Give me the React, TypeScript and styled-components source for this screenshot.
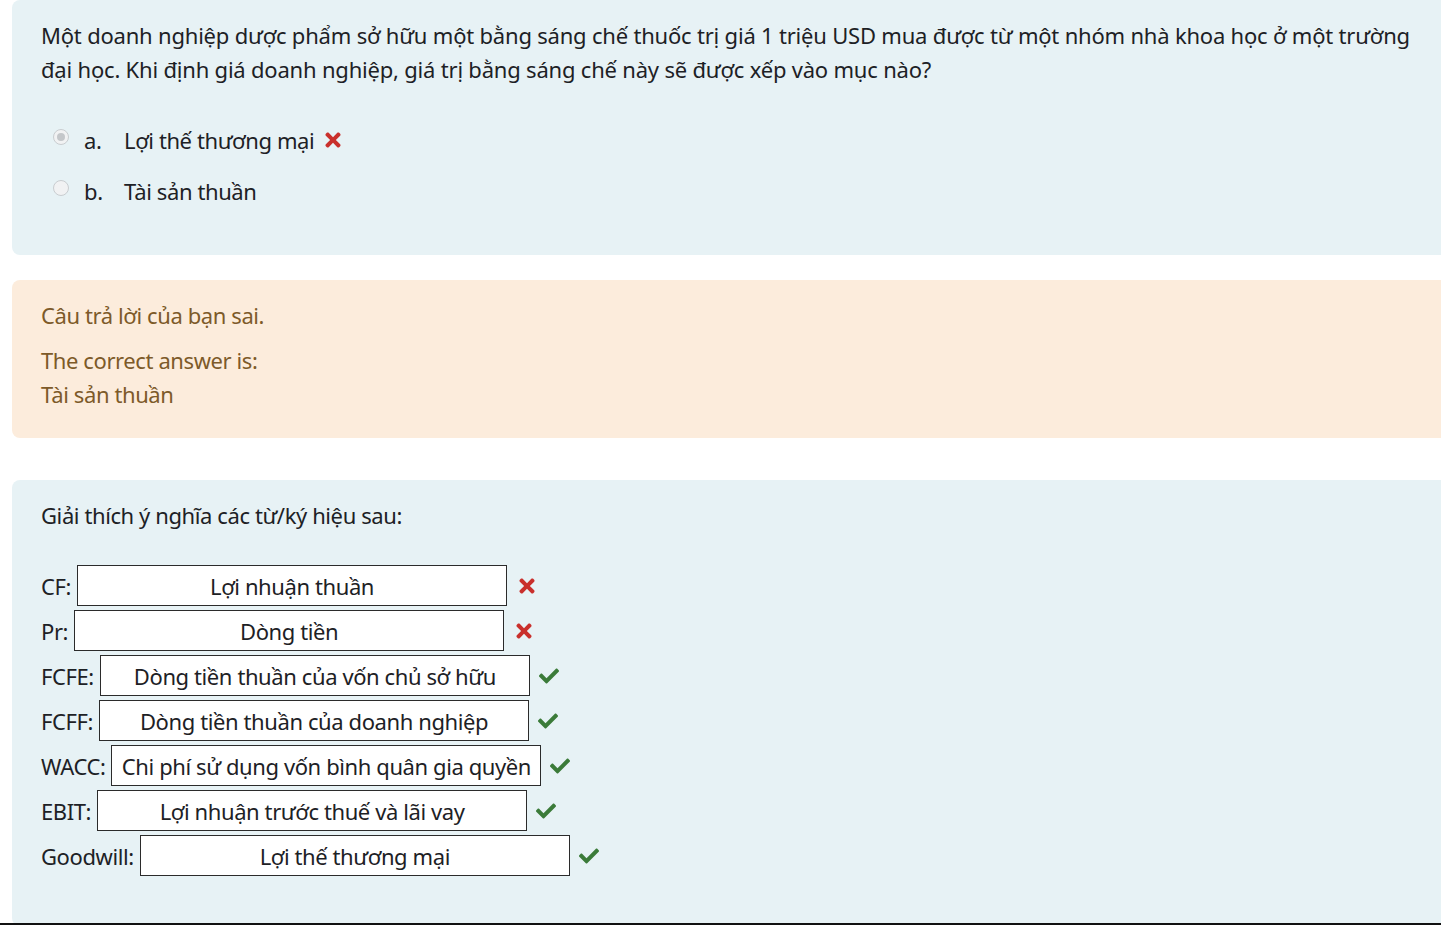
import React from "react";
import styled, { createGlobalStyle } from "styled-components";
import { FaTimes, FaCheck } from "react-icons/fa";

const Global = createGlobalStyle`
  html, body { margin: 0; padding: 0; background: #ffffff; overflow: hidden; }
  body { font-family: "Noto Sans", "Open Sans", sans-serif; color: #1d2125; }
  * { box-sizing: border-box; }
`;

const Page = styled.div`
  width: 1441px;
  height: 925px;
  overflow: hidden;
  display: flex;
  flex-direction: column;
  padding-left: 12px;
  border-bottom: 2px solid #111;
`;

const Panel = styled.div<{ $tone: "info" | "outcome"; $pt: number; $pb: number; $mt: number }>`
  width: calc(100% + 40px);
  margin-top: ${(p) => p.$mt}px;
  border-radius: 8px;
  padding: ${(p) => p.$pt}px 0 ${(p) => p.$pb}px 29px;
  background: ${(p) => (p.$tone === "info" ? "#e7f2f5" : "#fcecdc")};
  color: ${(p) => (p.$tone === "info" ? "#1d2125" : "#7d5a29")};
  font-size: 22px;
  line-height: 34px;
  letter-spacing: -0.4px;
  flex-shrink: 0;
`;

const Question = styled.div`
  width: 1390px;
  letter-spacing: -0.2px;
`;

const Options = styled.div`
  margin-top: 28px;
  display: flex;
  flex-direction: column;
`;

const Option = styled.div`
  display: flex;
  align-items: center;
  height: 51px;
  padding-left: 12px;
`;

const Radio = styled.span<{ $checked?: boolean }>`
  width: 16px;
  height: 16px;
  border-radius: 50%;
  border: 1px solid #c9cdd0;
  background: #f1f2f3;
  display: inline-flex;
  align-items: center;
  justify-content: center;
  margin-top: -6px;
  &::after {
    content: "";
    width: 8px;
    height: 8px;
    border-radius: 50%;
    background: ${(p) => (p.$checked ? "#c4c7ca" : "transparent")};
  }
`;

const Letter = styled.span`
  margin-left: 15px;
  width: 40px;
`;

const Cross = styled(FaTimes)<{ $ml?: number }>`
  color: #c9302c;
  font-size: 22px;
  margin-left: ${(p) => p.$ml ?? 0}px;
`;

const Check = styled(FaCheck)`
  color: #3b7b39;
  font-size: 20px;
`;

const Para = styled.div<{ $mt?: number }>`
  margin-top: ${(p) => p.$mt ?? 0}px;
`;

const Rows = styled.div`
  margin-top: 33px;
  display: flex;
  flex-direction: column;
  gap: 4px;
`;

const Row = styled.div`
  display: flex;
  align-items: center;
  height: 41px;
`;

const Label = styled.span`
  margin-right: 6px;
`;

const Box = styled.div`
  width: 430px;
  height: 41px;
  border: 1px solid #2b2b2b;
  background: #ffffff;
  display: flex;
  align-items: center;
  justify-content: center;
  white-space: nowrap;
`;

const Mark = styled.span`
  margin-left: 9px;
  display: inline-flex;
  align-items: center;
`;

const rows: { label: string; value: string; ok: boolean }[] = [
  { label: "CF:", value: "Lợi nhuận thuần", ok: false },
  { label: "Pr:", value: "Dòng tiền", ok: false },
  { label: "FCFE:", value: "Dòng tiền thuần của vốn chủ sở hữu", ok: true },
  { label: "FCFF:", value: "Dòng tiền thuần của doanh nghiệp", ok: true },
  { label: "WACC:", value: "Chi phí sử dụng vốn bình quân gia quyền", ok: true },
  { label: "EBIT:", value: "Lợi nhuận trước thuế và lãi vay", ok: true },
  { label: "Goodwill:", value: "Lợi thế thương mại", ok: true },
];

export default function App() {
  return (
    <>
      <Global />
      <Page>
        <Panel $tone="info" $pt={18} $pb={39} $mt={0}>
          <Question>
            Một doanh nghiệp dược phẩm sở hữu một bằng sáng chế thuốc trị giá 1 triệu USD mua được từ một nhóm nhà khoa học ở một trường
            đại học. Khi định giá doanh nghiệp, giá trị bằng sáng chế này sẽ được xếp vào mục nào?
          </Question>
          <Options>
            <Option>
              <Radio $checked />
              <Letter>a.</Letter>
              <span>Lợi thế thương mại</span>
              <Cross $ml={8} />
            </Option>
            <Option>
              <Radio />
              <Letter>b.</Letter>
              <span>Tài sản thuần</span>
            </Option>
          </Options>
        </Panel>

        <Panel $tone="outcome" $pt={18} $pb={27} $mt={25}>
          <Para>Câu trả lời của bạn sai.</Para>
          <Para $mt={11}>The correct answer is:</Para>
          <Para>Tài sản thuần</Para>
        </Panel>

        <Panel $tone="info" $pt={18} $pb={50} $mt={42}>
          <Para>Giải thích ý nghĩa các từ/ký hiệu sau:</Para>
          <Rows>
            {rows.map((r) => (
              <Row key={r.label}>
                <Label>{r.label}</Label>
                <Box>{r.value}</Box>
                <Mark>{r.ok ? <Check /> : <Cross />}</Mark>
              </Row>
            ))}
          </Rows>
        </Panel>
      </Page>
    </>
  );
}
